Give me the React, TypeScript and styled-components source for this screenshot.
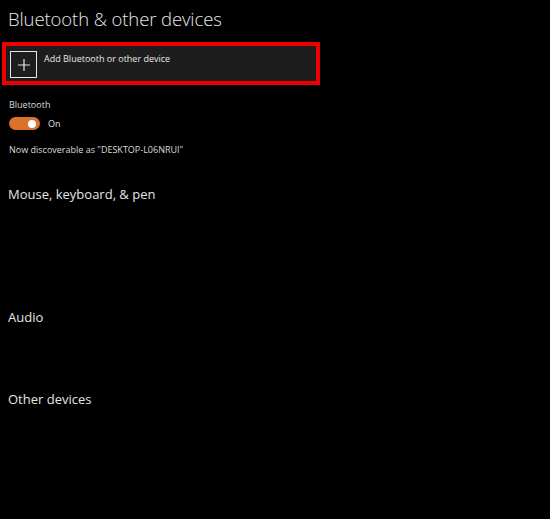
import React from "react";
import styled, { createGlobalStyle } from "styled-components";

const Global = createGlobalStyle`
  html, body { margin: 0; padding: 0; background: #000; }
  body { font-family: "Open Sans", "Noto Sans", sans-serif; color: #e6e6e6; }
`;

const Page = styled.div`
  width: 550px;
  height: 519px;
  background: #000;
  display: flex;
  flex-direction: column;
  padding-top: 6px;
  box-sizing: border-box;
`;

const Title = styled.h1`
  margin: 0 0 0 8px;
  font-size: 18.5px;
  font-weight: 300;
  line-height: 26px;
  color: #e8e8e8;
  letter-spacing: -0.1px;
`;

const AddButton = styled.div`
  margin: 10px 0 0 2px;
  width: 318px;
  height: 43px;
  box-sizing: border-box;
  border: 4px solid #ee0000;
  background: #1d1d1d;
  display: flex;
  align-items: flex-start;
  padding: 5px 0 0 4px;
  gap: 7px;
`;

const PlusBox = styled.div`
  width: 27px;
  height: 27px;
  box-sizing: border-box;
  border: 1.5px solid #e8e8e8;
  display: flex;
  align-items: center;
  justify-content: center;
`;

const ButtonText = styled.span`
  font-size: 9px;
  line-height: 12px;
  margin-top: 2px;
  color: #e8e8e8;
`;

const Label = styled.div<{ $top: number }>`
  margin: ${(p) => p.$top}px 0 0 9px;
  font-size: 9px;
  line-height: 12px;
  color: #dcdcdc;
`;

const ToggleRow = styled.div`
  margin: 6px 0 0 9px;
  display: flex;
  align-items: center;
  gap: 8px;
`;

const Toggle = styled.div`
  width: 31px;
  height: 13px;
  border-radius: 7px;
  background: #d9732c;
  position: relative;
`;

const Knob = styled.div`
  position: absolute;
  right: 4px;
  top: 2.5px;
  width: 8px;
  height: 8px;
  border-radius: 50%;
  background: #fff;
`;

const ToggleText = styled.span`
  font-size: 9px;
  line-height: 12px;
  color: #e0e0e0;
`;

const Section = styled.h2<{ $top: number }>`
  margin: ${(p) => p.$top}px 0 0 8px;
  font-size: 13px;
  font-weight: 400;
  line-height: 18px;
  color: #e4e4e4;
`;

export default function App() {
  return (
    <Page>
      <Global />
      <Title>Bluetooth &amp; other devices</Title>
      <AddButton>
        <PlusBox>
          <svg width="14" height="14" viewBox="0 0 14 14">
            <path d="M7 1v12M1 7h12" stroke="#e8e8e8" strokeWidth="1.2" />
          </svg>
        </PlusBox>
        <ButtonText>Add Bluetooth or other device</ButtonText>
      </AddButton>
      <Label $top={14}>Bluetooth</Label>
      <ToggleRow>
        <Toggle>
          <Knob />
        </Toggle>
        <ToggleText>On</ToggleText>
      </ToggleRow>
      <Label $top={14}>Now discoverable as "DESKTOP-L06NRUI"</Label>
      <Section $top={29}>Mouse, keyboard, &amp; pen</Section>
      <Section $top={105}>Audio</Section>
      <Section $top={64}>Other devices</Section>
    </Page>
  );
}
